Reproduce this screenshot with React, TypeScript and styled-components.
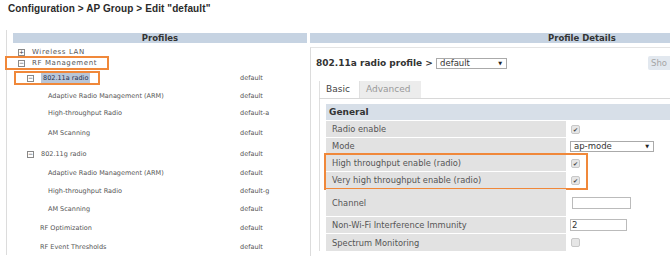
import styled, { createGlobalStyle } from 'styled-components';

const GlobalStyle = createGlobalStyle`
  body {
    margin: 0;
    background: #fff;
    font-family: "DejaVu Sans", Verdana, sans-serif;
    color: #444;
  }
`;

const Page = styled.div`
  width: 670px;
  height: 265px;
  overflow: hidden;
`;

const Title = styled.h1`
  margin: 0;
  height: 30px;
  padding: 3px 0 0 8px;
  box-sizing: border-box;
  font: bold 10px "Liberation Sans", Arial, sans-serif;
  letter-spacing: 0.1px;
  color: #2a2a2a;
`;

const Frame = styled.div`
  margin-left: 6px;
  height: 222px;
  border-left: 1px solid #dcdcdc;
  padding: 3px 0 0 6px;
  display: grid;
  grid-template-columns: 294px 1fr;
  grid-template-rows: 10px 1fr;
  column-gap: 3px;
`;

const Header = styled.div<{ $indent?: number }>`
  background: #c6d3e2;
  font-size: 8.5px;
  font-weight: bold;
  color: #333;
  line-height: 10px;
  text-align: ${({ $indent }) => ($indent ? 'left' : 'center')};
  padding-left: ${({ $indent }) => $indent || 0}px;
`;

const Tree = styled.div`
  padding-top: 4px;
  display: flex;
  flex-direction: column;
`;

const TreeRow = styled.div<{ $h: number }>`
  height: ${({ $h }) => $h}px;
  display: flex;
  align-items: center;
  font-size: 6.5px;
  color: #555;
`;

const NameCell = styled.div<{ $indent: number }>`
  width: 227px;
  padding-left: ${({ $indent }) => $indent}px;
  box-sizing: border-box;
  display: flex;
  align-items: center;
`;

const Marked = styled.span<{ $on?: boolean; $tight?: boolean }>`
  display: inline-flex;
  align-items: center;
  gap: 7px;
  padding: ${({ $on, $tight }) => ($on ? ($tight ? '0 8px 0 11px' : '1px 10px 1px 11px') : '0')};
  margin-left: ${({ $on }) => ($on ? -11 : 0)}px;
  outline: ${({ $on }) => ($on ? '2px solid #f0883a' : 'none')};
`;

const Toggle = styled.span`
  width: 5px;
  height: 5px;
  border: 1px solid #888;
  display: inline-flex;
  align-items: center;
  justify-content: center;
  font-size: 6px;
  line-height: 1;
  color: #333;
`;

const Label = styled.span<{ $top?: boolean; $selected?: boolean }>`
  font-size: ${({ $top }) => ($top ? 7 : 6.5)}px;
  line-height: 8px;
  letter-spacing: ${({ $top }) => ($top ? 0.6 : 0)}px;
  background: ${({ $selected }) => ($selected ? '#b9c6d8' : 'transparent')};
  color: ${({ $selected }) => ($selected ? '#1f3050' : 'inherit')};
  padding: ${({ $selected }) => ($selected ? '1px 2px' : '0')};
`;

const Details = styled.div`
  margin-top: 4px;
  border-top: 1px solid #e4e4e4;
  border-left: 1px solid #dcdcdc;
  padding: 8px 0 0 5px;
`;

const ProfileBar = styled.div`
  display: flex;
  align-items: center;
  font-size: 9px;
  font-weight: bold;
  color: #333;
  height: 14px;
`;

const Select = styled.div<{ $w: number }>`
  width: ${({ $w }) => $w}px;
  height: 11px;
  border: 1px solid #aaa;
  background: #fff;
  box-sizing: border-box;
  display: flex;
  align-items: center;
  justify-content: space-between;
  padding: 0 4px 0 3px;
  font-size: 8.5px;
  font-weight: normal;
  color: #333;

  &::after {
    content: '▼';
    font-size: 5px;
    color: #222;
  }
`;

const ShowButton = styled.div`
  margin-left: auto;
  width: 22px;
  height: 14px;
  background: #e2e8ef;
  border-radius: 2px 0 0 2px;
  color: #a5a5a5;
  font-weight: normal;
  font-size: 8.5px;
  line-height: 14px;
  padding-left: 3px;
  box-sizing: border-box;
  overflow: hidden;
  white-space: nowrap;
`;

const Tabs = styled.div`
  display: flex;
  margin: 11px 0 0 3px;
  border-bottom: 1px solid #d8d8d8;
  height: 17px;
`;

const Tab = styled.div<{ $active?: boolean }>`
  padding: 0 6px;
  line-height: 17px;
  font-size: 9px;
  color: ${({ $active }) => ($active ? '#444' : '#999')};
  background: ${({ $active }) => ($active ? '#fff' : '#ececec')};
  border-left: 1px solid #e0e0e0;
  width: ${({ $active }) => ($active ? 40 : 62)}px;
  box-sizing: border-box;
`;

const TabPanel = styled.div`
  margin-left: 3px;
  border-left: 1px solid #dedede;
  padding: 5px 0 0 6px;
`;

const Section = styled.div`
  display: flex;
  flex-direction: column;
  gap: 1px;
`;

const SectionHead = styled.div`
  background: #d7dfe8;
  height: 16px;
  line-height: 16px;
  padding-left: 3px;
  font-size: 9px;
  font-weight: bold;
  color: #333;
`;

const Group = styled.div`
  display: flex;
  flex-direction: column;
  gap: 1px;
  outline: 2px solid #f0883a;
  margin-right: 84px;
`;

const Row = styled.div<{ $h?: number }>`
  display: grid;
  grid-template-columns: 240px 1fr;
  height: ${({ $h }) => $h || 16}px;
`;

const Cell = styled.div`
  background: #e2e2e2;
  display: flex;
  align-items: center;
  padding-left: 6px;
  font-size: 8.3px;
  color: #555;
`;

const Value = styled.div<{ $pad?: number }>`
  display: flex;
  align-items: center;
  padding-left: ${({ $pad }) => $pad ?? 5}px;
`;

const Check = styled.span`
  width: 9px;
  height: 9px;
  box-sizing: border-box;
  border: 1px solid #c8c8c8;
  border-radius: 2px;
  background: #e6e6e6;
  display: inline-flex;
  align-items: center;
  justify-content: center;
  font-size: 6px;
  color: #444;
`;

const TextBox = styled.div<{ $w: number }>`
  width: ${({ $w }) => $w}px;
  height: 12px;
  box-sizing: border-box;
  border: 1px solid #bbb;
  font-size: 8.5px;
  line-height: 10px;
  padding-left: 1px;
  color: #333;
`;

const tree = [
  { name: 'Wireless LAN', h: 10, indent: 5, toggle: '+', top: true },
  { name: 'RF Management', h: 12, indent: 5, toggle: '−', top: true, marked: true },
  { name: '802.11a radio', h: 18, indent: 14, toggle: '−', value: 'default', marked: true, selected: true },
  { name: 'Adaptive Radio Management (ARM)', h: 17, indent: 35, value: 'default' },
  { name: 'High-throughput Radio', h: 18, indent: 35, value: 'default-a' },
  { name: 'AM Scanning', h: 22, indent: 35, value: 'default' },
  { name: '802.11g radio', h: 20, indent: 14, toggle: '−', value: 'default' },
  { name: 'Adaptive Radio Management (ARM)', h: 18, indent: 35, value: 'default' },
  { name: 'High-throughput Radio', h: 18, indent: 35, value: 'default-g' },
  { name: 'AM Scanning', h: 18, indent: 35, value: 'default' },
  { name: 'RF Optimization', h: 20, indent: 27, value: 'default' },
  { name: 'RF Event Thresholds', h: 18, indent: 27, value: 'default' },
];

export default function App() {
  return (
    <Page>
      <GlobalStyle />
      <Title>Configuration &gt; AP Group &gt; Edit "default"</Title>
      <Frame>
        <Header>Profiles</Header>
        <Header $indent={238}>Profile Details</Header>
        <Tree>
          {tree.map((item, i) => (
            <TreeRow key={i} $h={item.h}>
              <NameCell $indent={item.indent}>
                <Marked $on={item.marked} $tight={item.selected}>
                  {item.toggle && <Toggle>{item.toggle}</Toggle>}
                  <Label $top={item.top} $selected={item.selected}>{item.name}</Label>
                </Marked>
              </NameCell>
              <span>{item.value}</span>
            </TreeRow>
          ))}
        </Tree>
        <Details>
          <ProfileBar>
            802.11a radio profile &gt;&nbsp;
            <Select $w={71}>default</Select>
            <ShowButton>Sho</ShowButton>
          </ProfileBar>
          <Tabs>
            <Tab $active>Basic</Tab>
            <Tab>Advanced</Tab>
          </Tabs>
          <TabPanel>
            <Section>
              <SectionHead>General</SectionHead>
              <Row>
                <Cell>Radio enable</Cell>
                <Value><Check>✔</Check></Value>
              </Row>
              <Row>
                <Cell>Mode</Cell>
                <Value $pad={4}><Select $w={84}>ap-mode</Select></Value>
              </Row>
              <Group>
                <Row>
                  <Cell>High throughput enable (radio)</Cell>
                  <Value><Check>✔</Check></Value>
                </Row>
                <Row>
                  <Cell>Very high throughput enable (radio)</Cell>
                  <Value><Check>✔</Check></Value>
                </Row>
              </Group>
              <Row $h={27}>
                <Cell>Channel</Cell>
                <Value $pad={6}><TextBox $w={59} /></Value>
              </Row>
              <Row>
                <Cell>Non-Wi-Fi Interference Immunity</Cell>
                <Value $pad={4}><TextBox $w={57}>2</TextBox></Value>
              </Row>
              <Row $h={17}>
                <Cell>Spectrum Monitoring</Cell>
                <Value><Check /></Value>
              </Row>
            </Section>
          </TabPanel>
        </Details>
      </Frame>
    </Page>
  );
}
